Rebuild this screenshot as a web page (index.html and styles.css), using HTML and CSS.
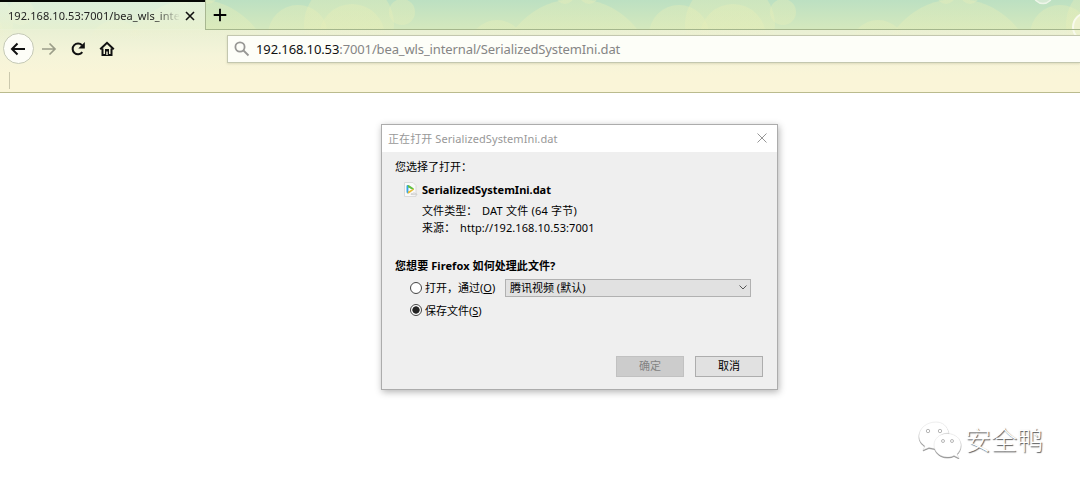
FILE: index.html
```html
<!DOCTYPE html>
<html lang="zh-CN">
<head>
<meta charset="utf-8">
<title>SerializedSystemIni.dat</title>
<link rel="stylesheet" href="styles.css">
</head>
<body>
<header class="chrome">
  <svg class="bubbles" width="1080" height="92" viewBox="0 0 1080 92" aria-hidden="true">
    <defs>
      <linearGradient id="fade" x1="0" y1="0" x2="0" y2="40" gradientUnits="userSpaceOnUse">
        <stop offset="0" stop-color="#e7eeb9" stop-opacity=".38"/>
        <stop offset=".72" stop-color="#e7eeb9" stop-opacity=".38"/>
        <stop offset=".74" stop-color="#eef1cc" stop-opacity=".22"/>
        <stop offset="1" stop-color="#f4f2cc" stop-opacity="0"/>
      </linearGradient>
      <g id="cluster" fill="url(#fade)">
        <circle cx="195" cy="76" r="77"/><circle cx="116" cy="48" r="28"/>
        <circle cx="298" cy="35" r="30"/><circle cx="352" cy="37" r="33"/>
        <circle cx="349" cy="25" r="45"/><circle cx="402" cy="12" r="13"/>
        <circle cx="184" cy="-5" r="9"/><circle cx="208" cy="-5" r="9"/>
      </g>
    </defs>
    <use href="#cluster" x="-381"/><use href="#cluster"/><use href="#cluster" x="381"/><use href="#cluster" x="762"/>
    <circle cx="1043" cy="-6" r="9.5" fill="#d5ead4" stroke="#eef5e9" stroke-width="1.5"/>
    <circle cx="1087" cy="27" r="14" fill="#edf2cf" stroke="#f8faed" stroke-width="2"/>
  </svg>
  <div class="tabs">
    <div class="tab">
      <span class="tab-title">192.168.10.53:7001/bea_wls_inte</span>
      <svg class="tab-close" width="10" height="10" viewBox="0 0 10 10"><path d="M1 1l8 8M9 1L1 9"/></svg>
    </div>
    <div class="newtab"><svg width="14" height="14" viewBox="0 0 14 14"><path d="M7 .7v12.6M.7 7h12.6"/></svg></div>
  </div>
  <div class="toolbar">
    <span class="back"><svg width="16" height="14" viewBox="0 0 16 14"><path d="M15 7H2M7.500 1.500L2 7l5.500 5.500"/></svg></span>
    <svg class="forward" width="16" height="14" viewBox="0 0 16 14"><path d="M1 7h13M8.500 1.500L14 7l-5.500 5.500"/></svg>
    <svg class="reload" width="16" height="16" viewBox="0 0 16 16"><path class="line" d="M12.300 11.200A5.400 5.400 0 1 1 12 4.200"/><path d="M14.800 1v6.500H8.300z"/></svg>
    <svg class="home" width="16" height="16" viewBox="0 0 16 16"><path class="line" d="M1.200 8.300L8 1.800l6.800 6.500M3.500 7.500v6.600h9V7.500"/><path d="M6 8h4v6H6z"/><path class="hole" d="M7.300 10.500h1.400V14H7.300z"/></svg>
    <div class="address">
      <svg width="16" height="16" viewBox="0 0 16 16"><circle cx="6" cy="6" r="4.600"/><path d="M9.500 9.500l5 5"/></svg>
      <span class="url"><b>192.168.10.53</b>:7001/bea_wls_internal/SerializedSystemIni.dat</span>
    </div>
  </div>
  <div class="bookmarks"><i class="divider"></i></div>
</header>
<main class="page">
  <section class="dialog">
    <div class="titlebar"><span class="title">正在打开 SerializedSystemIni.dat</span>
      <svg width="10" height="10" viewBox="0 0 10 10"><path d="M.5.500l9 9M9.500.500l-9 9"/></svg></div>
    <div class="content">
      <p class="intro">您选择了打开：</p>
      <div class="file">
        <svg width="14" height="15" viewBox="0 0 14 15"><path d="M.5.500h8.500l3 3v11H.5z" fill="#f9f9f9" stroke="#dadada"/><path d="M2.500 4.500q0-2 2-1.200v8q-2 .5-2-1.500z" fill="#35a5e6"/><path d="M3.500 3.200q1-.3 2 .4l4 2.700q1 1 0 1.800L4.500 6z" fill="#63c043"/><path d="M3.500 11.300q1 .3 2-.4l4-2.800q.7-.8.300-1.300L4.500 9z" fill="#e9bd35"/><path d="M4.800 5.700v3.400l2.700-1.700z" fill="#fff"/><path d="M7 12.500q0-1.500 1.500-1 1.500-1.500 3 0 1.500 0 1.500 1.300z" fill="#eee" stroke="#c6c6c6" stroke-width=".7"/></svg>
        <strong class="filename">SerializedSystemIni.dat</strong>
      </div>
      <p class="detail"><span class="label">文件类型：</span><span class="kind">DAT 文件 (64 字节)</span></p>
      <p class="detail"><span class="label source">来源：</span><span class="host">http://192.168.10.53:7001</span></p>
      <p class="question">您想要 <span class="latin">Firefox</span> 如何处理此文件?</p>
      <div class="choice"><i class="radio"></i><span class="open">打开，通过(<u>O</u>)</span>
        <div class="select"><span>腾讯视频 (默认)</span><svg width="8" height="5" viewBox="0 0 8 5"><path d="M.5.500L4 4 7.500.500"/></svg></div></div>
      <div class="choice save"><i class="radio on"></i><span>保存文件(<u>S</u>)</span></div>
      <div class="actions"><span class="button disabled">确定</span><span class="button">取消</span></div>
    </div>
  </section>
  <div class="brand">
    <svg class="brand-logo" width="44" height="38" viewBox="0 0 44 38">
      <g><path d="M18 1C9 1 1 7 1 15c0 5 3 8 6 10l-2 4 6-2.500c3 .8 5 1 7 1C17 18 22 12 31 12 29 5 25 1 18 1z"/><path d="M29 12.500c-7 0-13 5-13 11.500s6 12 13 12c3 0 5-.5 7-1.500l5 2.500-2-4c2-2 4-5 4-9 0-6.500-6-11.500-14-11.500z"/></g>
      <g class="eyes"><circle cx="10" cy="10" r="1.700"/><circle cx="22" cy="10" r="1.700"/><circle cx="25" cy="20" r="1.500"/><circle cx="34" cy="20" r="1.500"/></g>
    </svg>
    <span class="brand-name">安全鸭</span>
  </div>
</main>
</body>
</html>
```
FILE: styles.css
```css
* { box-sizing: border-box; }
body { margin: 0; width: 1080px; height: 489px; overflow: hidden; background: #fff; font-family: "Noto Sans", "Noto Sans CJK SC", sans-serif; color: #000; }
p { margin: 0; }
span, strong { white-space: nowrap; }
svg { display: block; flex: none; fill: none; }
.chrome { position: relative; height: 93px; border-bottom: 1px solid #babb8e; background: linear-gradient(#bce0c2 0, #d4e8bd 29px, #e9f0d4 30px, #f5f4d9 55px, #faf5d8 75px); }
.bubbles { position: absolute; left: 0; top: 0; }
.tabs { position: relative; display: flex; height: 30px; }
.tab { display: flex; align-items: center; width: 205px; padding: 0 0 0 8px; border-top: 2px solid #050805; background: linear-gradient(rgba(239,247,235,.6), rgba(240,245,222,.6)); }
.tab-title { width: 172px; overflow: hidden; font-size: 11px; line-height: 18px; letter-spacing: .08px; color: #222; -webkit-mask-image: linear-gradient(90deg, #000 86%, transparent); mask-image: linear-gradient(90deg, #000 86%, transparent); }
.tab-close { margin-left: 5px; stroke: #111; stroke-width: 1.6; }
.newtab { flex: 1; padding: 8px 0 0 7px; border-left: 1px solid #a8b791; border-bottom: 1px solid #a4b68c; }
.newtab svg { stroke: #000; stroke-width: 1.8; }
.toolbar { position: relative; display: flex; align-items: center; height: 37px; padding-left: 3px; }
.back { display: flex; align-items: center; justify-content: center; width: 31px; height: 31px; border: 1px solid #c5c9b6; border-radius: 50%; background: #fdfdf7; }
.back svg { margin-right: 2px; stroke: #111; stroke-width: 2; }
.forward { margin-left: 7px; stroke: #9b9d89; stroke-width: 1.7; }
.reload { margin-left: 13px; fill: #111; }
.home { margin-left: 13px; fill: #111; }
.line { fill: none; stroke: #111; stroke-width: 2; }
.hole { fill: #f2f3da; }
.address { display: flex; align-items: center; flex: 1; height: 28px; margin-left: 112px; padding-left: 6px; border: 1px solid #c3c7af; border-right: 0; background: #fdfef8; box-shadow: 0 1px 2px rgba(100,100,60,.18); }
.address svg { stroke: #979794; stroke-width: 1.8; }
.url { margin-left: 6px; font-size: 13px; line-height: 20px; letter-spacing: -.12px; color: #858585; }
.url b { font-weight: 400; color: #111; }
.bookmarks { position: relative; height: 25px; padding: 5px 0 0 9px; }
.divider { display: block; width: 1px; height: 17px; background: #cbc8ad; }
.page { position: relative; height: 396px; padding: 31px 0 0 381px; }
.dialog { width: 397px; height: 266px; border: 1px solid #acacac; background: #efefef; box-shadow: 1px 2px 7px rgba(0,0,0,.3); font-size: 11px; }
.titlebar { display: flex; align-items: center; justify-content: space-between; height: 27px; padding: 0 10px 2px 6px; background: #fff; color: #989898; }
.titlebar svg { margin-top: 1px; stroke: #969696; stroke-width: 1; }
.title { letter-spacing: .09px; }
.content { padding: 6px 14px 0 13px; }
.intro { height: 18px; line-height: 18px; }
.file { display: flex; align-items: center; gap: 4px; height: 26px; padding: 1px 0 0 9px; }
.filename { font-size: 11px; letter-spacing: 0; }
.detail { display: flex; height: 17px; padding-left: 27px; line-height: 17px; letter-spacing: .08px; }
.kind { letter-spacing: .22px; }
.label { width: 60px; }
.source { width: 38px; }
.question { height: 20px; margin-top: 20px; line-height: 20px; font-weight: 700; letter-spacing: .08px; }
.choice { display: flex; align-items: center; height: 23px; padding-left: 15px; }
.choice > span { padding-bottom: 1px; }
.radio { width: 12px; height: 12px; margin-right: 3px; border: 1px solid #444; border-radius: 50%; background: #fff; }
.on { background: radial-gradient(circle, #222 0 3.3px, #fff 4px); }
.open { width: 80px; }
.select { display: flex; align-items: center; justify-content: space-between; width: 246px; height: 18px; padding: 0 3px 1px 4px; border: 1px solid #b1b1b1; background: #e1e1e1; }
.select svg { stroke: #555; }
.save { height: 22px; }
.actions { display: flex; justify-content: flex-end; gap: 11px; margin-top: 35px; }
.button { width: 68px; height: 21px; border: 1px solid #adadad; background: #e1e1e1; line-height: 18px; text-align: center; }
.disabled { border-color: #c1c1c1; background: #ccc; color: #838383; }
.brand { position: absolute; left: 918px; top: 328px; display: flex; align-items: center; gap: 3px; }
.brand-logo g { fill: #fff; stroke: #dedede; stroke-width: .5; filter: drop-shadow(.8px 1px .3px #858585); }
.brand-logo .eyes { stroke: #888; stroke-width: .6; filter: none; }
.brand-name { font: 300 26px/32px "Noto Sans CJK SC", sans-serif; padding-bottom: 3px; color: #fff; text-shadow: 1px 1px 1px #555; }
```
